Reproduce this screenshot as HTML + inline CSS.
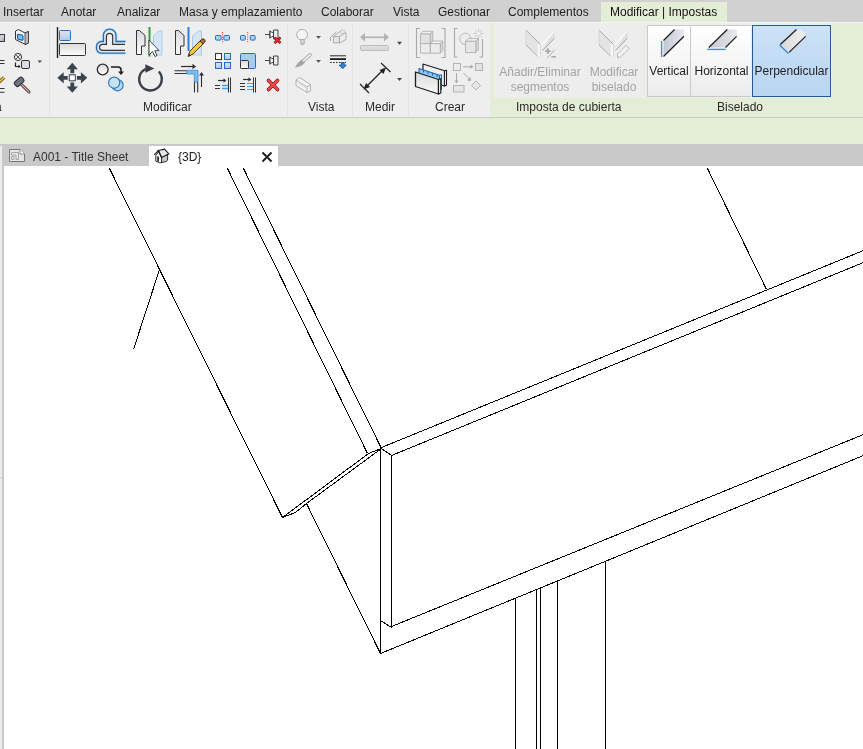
<!DOCTYPE html>
<html><head><meta charset="utf-8">
<style>
*{margin:0;padding:0;box-sizing:border-box}
html,body{width:863px;height:749px;overflow:hidden;background:#fff;font-family:"Liberation Sans",sans-serif;}
.mt,.pt,.bt,.tt{will-change:transform}
.abs{position:absolute}
.mt{position:absolute;top:5px;font-size:12px;color:#1e1e1e;white-space:nowrap;line-height:14px}
.pt{position:absolute;top:100px;font-size:12px;color:#2a2a2a;white-space:nowrap;line-height:14px}
.bt{position:absolute;font-size:12px;white-space:nowrap;line-height:15px;text-align:center}
.tt{position:absolute;top:0;font-size:12px;color:#333;white-space:nowrap;line-height:14px}
</style></head><body>
<!-- menubar -->
<div class="abs" style="left:0;top:0;width:863px;height:22px;background:#d1d1d1"></div>
<div class="abs" style="left:601px;top:2px;width:126px;height:21px;background:#e4eed6"></div>
<div class="mt" style="left:3px">Insertar</div>
<div class="mt" style="left:61px">Anotar</div>
<div class="mt" style="left:117px">Analizar</div>
<div class="mt" style="left:179px">Masa y emplazamiento</div>
<div class="mt" style="left:321px">Colaborar</div>
<div class="mt" style="left:393px">Vista</div>
<div class="mt" style="left:438px">Gestionar</div>
<div class="mt" style="left:508px">Complementos</div>
<div class="mt" style="left:610px;color:#111">Modificar | Impostas</div>
<!-- ribbon -->
<div class="abs" style="left:0;top:22px;width:863px;height:95px;background:#eeeeee"></div>
<div class="abs" style="left:490px;top:22px;width:373px;height:95px;background:#e4eed6"></div>
<div class="abs" style="left:494px;top:23px;width:150px;height:74.5px;background:#ededed"></div>
<div class="abs" style="left:645px;top:23px;width:186px;height:74.5px;background:#ededed"></div>
<div class="abs" style="left:0;top:117px;width:863px;height:1px;background:#c6cebd"></div>
<div class="abs" style="left:0;top:22px;width:863px;height:1px;background:#f3f5ee"></div>
<!-- dividers -->
<div class="abs" style="left:49px;top:24px;width:1px;height:92px;background:#e4e4e4"></div>
<div class="abs" style="left:287px;top:24px;width:1px;height:92px;background:#e4e4e4"></div>
<div class="abs" style="left:352px;top:24px;width:1px;height:92px;background:#e4e4e4"></div>
<div class="abs" style="left:408px;top:24px;width:1px;height:92px;background:#e4e4e4"></div>

<div class="pt" style="left:143px">Modificar</div>
<div class="pt" style="left:308px">Vista</div>
<div class="pt" style="left:365px">Medir</div>
<div class="pt" style="left:435px">Crear</div>
<div class="pt" style="left:515.5px">Imposta de cubierta</div>
<div class="pt" style="left:717px">Biselado</div>
<div class="pt" style="left:-5px">a</div>

<!-- biselado buttons -->
<div class="abs" style="left:647px;top:25px;width:44px;height:72px;background:linear-gradient(#ffffff,#ececec);border:1px solid #c9c9c9"></div>
<div class="abs" style="left:691px;top:25px;width:61px;height:72px;background:linear-gradient(#ffffff,#ececec);border:1px solid #c9c9c9;border-left:none"></div>
<div class="abs" style="left:752px;top:25px;width:79px;height:72px;background:linear-gradient(#cde2f7,#b8d5f1);border:1px solid #28589a;box-shadow:0 0 0 1px #dff1ff"></div>
<div class="bt" style="left:647px;top:63.5px;width:44px;color:#222">Vertical</div>
<div class="bt" style="left:691px;top:63.5px;width:61px;color:#222">Horizontal</div>
<div class="bt" style="left:752px;top:63.5px;width:79px;color:#222">Perpendicular</div>
<div class="bt" style="left:495px;top:64.5px;width:90px;color:#a3a3a3">Añadir/Eliminar<br>segmentos</div>
<div class="bt" style="left:585px;top:64.5px;width:58px;color:#a3a3a3">Modificar<br>biselado</div>

<!-- band + tabs -->
<div class="abs" style="left:0;top:118px;width:863px;height:26px;background:#e4eed6"></div>
<div class="abs" style="left:0;top:144px;width:863px;height:22px;background:#c9c9c9"></div>
<div class="abs" style="left:0;top:146px;width:2px;height:603px;background:#ececec"></div>
<div class="abs" style="left:2px;top:166px;width:2px;height:583px;background:#c9c9c9"></div>
<div class="abs" style="left:0;top:477px;width:2px;height:1px;background:#d4d4d4"></div>
<div class="abs" style="left:4px;top:166px;width:859px;height:583px;background:#fff"></div>
<div class="abs" style="left:149px;top:146px;width:129px;height:20px;background:#fff"></div>
<div class="tt" style="left:33px;top:150px">A001 - Title Sheet</div>
<div class="tt" style="left:178px;top:150px;color:#222">{3D}</div>

<svg class="abs" style="left:0;top:0" width="863" height="170">
<defs>
<linearGradient id="gg" x1="0" y1="0" x2="0" y2="1"><stop offset="0" stop-color="#d9d9dc"/><stop offset="1" stop-color="#fbfbfb"/></linearGradient>
<linearGradient id="bg" x1="0" y1="0" x2="0" y2="1"><stop offset="0" stop-color="#d6e9f7"/><stop offset="1" stop-color="#a6cbe8"/></linearGradient>
<linearGradient id="dg" x1="0" y1="0" x2="1" y2="1"><stop offset="0" stop-color="#c8cdd6"/><stop offset="1" stop-color="#f2f3f5"/></linearGradient>
</defs>
<!-- partial icons left edge -->
<defs><linearGradient id="pg" x1="0" y1="0" x2="1" y2="1"><stop offset="0" stop-color="#8d9096"/><stop offset="0.5" stop-color="#d6d8dc"/><stop offset="1" stop-color="#9a9da3"/></linearGradient></defs><rect x="-4" y="34.5" width="8.5" height="7" fill="url(#pg)" stroke="#3a3a3a"/>
<path d="M0 60.5H4.5M0 63.5H4.5" stroke="#333" stroke-width="1"/>
<path d="M-1 82L4 77.5" stroke="#5a3a10" stroke-width="3.2"/><path d="M-1 82L4 77.5" stroke="#f2c230" stroke-width="1.8"/>
<path d="M0 88.5H4.5M0 92.3H4.5" stroke="#333" stroke-width="1"/>
<!-- wall icon -->
<path d="M15.5 31L18.5 29.5L25 33L28.5 31.5V43L25.5 44.5L15.5 39.5Z" fill="#fafafa" stroke="#333"/>
<path d="M25 33V44.5L28.5 43V31.5Z" fill="#b8bcc4" stroke="#333" stroke-width="0.8"/>
<rect x="17.5" y="34.5" width="5.5" height="5" rx="1" fill="#7fc0f0" stroke="#1f64b0" stroke-width="1.2" transform="skewY(12) translate(0,-4)"/>
<!-- change type icon -->
<circle cx="18" cy="57" r="3.6" fill="none" stroke="#333"/>
<path d="M15.5 54.5L20.5 59.5M20.5 54.5L15.5 59.5" stroke="#333" stroke-width="0.8"/>
<path d="M15.5 62.5V66.5H19" stroke="#222" fill="none" stroke-width="1.2"/>
<path d="M18.5 64.5L20.5 66.5L18.5 68.5Z" fill="#222"/>
<rect x="21.5" y="60.5" width="8" height="8" rx="1.5" fill="#dadde2" stroke="#333"/>
<path d="M37.5 60.5H42L39.75 63Z" fill="#444"/>
<!-- hammer -->
<path d="M21.5 84.5L29 92" stroke="#3a2a25" stroke-width="3" stroke-linecap="round"/>
<path d="M21.5 84.5L29 92" stroke="#d4b0a8" stroke-width="1.3" stroke-linecap="round"/>
<rect x="14.1" y="79" width="10" height="5.7" rx="1.8" transform="rotate(-42 19.1 81.8)" fill="#6e737b" stroke="#2a2d33" stroke-width="1.1"/>
<!-- align -->
<path d="M57.5 27V58" stroke="#1c1c1c" stroke-width="1.4"/>
<rect x="59.5" y="30.5" width="11" height="10" rx="1" fill="url(#bg)" stroke="#2e6db4"/>
<rect x="59.5" y="43.5" width="26" height="12" rx="1" fill="url(#gg)" stroke="#333"/>
<!-- offset -->
<path d="M125.5 41.5H116V35.5A6.3 6.3 0 0 0 103.4 35.5V41.5H101.5A5 5 0 0 0 96.5 46.5V48.2A5 5 0 0 0 101.5 53.2H125.5" fill="none" stroke="#c4e2fa" stroke-width="3"/>
<path d="M125.5 41.5H116V35.5A6.3 6.3 0 0 0 103.4 35.5V41.5H101.5A5 5 0 0 0 96.5 46.5V48.2A5 5 0 0 0 101.5 53.2H125.5" fill="none" stroke="#2d6db4" stroke-width="1.3"/>
<path d="M125 44.3H112.7V36.5A3.15 3.15 0 0 0 106.4 36.5V44.3H102.5A3 3 0 0 0 99.5 47.3V47.5A3 3 0 0 0 102.5 50.4H125" fill="none" stroke="#333" stroke-width="1.2"/>
<!-- mirror pick -->
<path d="M136.5 30.5H139.5L145 35.5V46H141.5V54.5H136.5Z" fill="url(#gg)" stroke="#333"/>
<path d="M162 31H159L153.5 36V55H162Z" fill="#d4e6f5" stroke="#9cc3e4" stroke-width="0.8"/>
<path d="M149.5 27V56.5" stroke="#3c9a3c" stroke-width="2"/>
<path d="M149 40V55L152.5 51.5L155 56.5L157 55.5L154.8 50.8L159 50.5Z" fill="#fff" stroke="#333" stroke-width="0.9"/>
<!-- mirror draw -->
<path d="M175.5 30.5H178.5L184 35.5V46H180.5V54.5H175.5Z" fill="url(#gg)" stroke="#333"/>
<path d="M201.5 31H198.5L192.5 36V55H201.5Z" fill="#d4e6f5" stroke="#9cc3e4" stroke-width="0.8"/>
<path d="M188.5 27V51" stroke="#2f7fd0" stroke-width="2"/>
<path d="M188 56.5L190 51L200 41L203 44L193 54Z" fill="#f6c53a" stroke="#3a2a10" stroke-width="0.9"/>
<path d="M200 41L201.5 39.5A1.5 1.5 0 0 1 204.5 42.5L203 44Z" fill="#b06a40" stroke="#3a2a10" stroke-width="0.9"/>
<path d="M188 56.5L188.8 53.5L191 55.7Z" fill="#333"/>
<!-- move -->
<g fill="#3b434e">
<path d="M72.3 62.8L77.9 69.2H74.2V73.2H70.4V69.2H66.7Z"/>
<path d="M72.3 62.8L77.9 69.2H74.2V73.2H70.4V69.2H66.7Z" transform="rotate(90 72.3 77.8)"/>
<path d="M72.3 62.8L77.9 69.2H74.2V73.2H70.4V69.2H66.7Z" transform="rotate(180 72.3 77.8)"/>
<path d="M72.3 62.8L77.9 69.2H74.2V73.2H70.4V69.2H66.7Z" transform="rotate(270 72.3 77.8)"/>
</g>
<rect x="69.3" y="74.8" width="6" height="6" fill="#fff" stroke="#3b434e" stroke-width="1"/>
<!-- copy -->
<circle cx="102.7" cy="69.5" r="5.4" fill="url(#gg)" stroke="#2a2a2a" stroke-width="1.3"/>
<path d="M111 67H118A3 3 0 0 1 121 70V72" fill="none" stroke="#1a1a1a" stroke-width="1.5"/>
<path d="M118 71.5H124L121 75Z" fill="#222"/>
<circle cx="117.5" cy="85.2" r="5.6" fill="#b8dcf4" stroke="#2f78c4" stroke-width="1.2"/>
<circle cx="114.2" cy="82.7" r="5.6" fill="#c8e2f5" stroke="#2f78c4" stroke-width="1.2"/>
<!-- rotate -->
<path d="M158.8 71.5A11.3 11.3 0 1 1 145.5 69" fill="none" stroke="#3a3f46" stroke-width="2.4"/>
<path d="M145.3 64.3L154.4 68.4L145.3 72.8Z" fill="#3a3f46"/>
<!-- trim corner -->
<path d="M181 66.5H193" stroke="#2a2f36" stroke-width="1.2"/>
<path d="M192.5 63.8L196 66.5L192.5 69.2Z" fill="#2a2f36"/>
<path d="M174.5 70.8H186.5M174.5 73.5H186.5" stroke="#333" stroke-width="1.1"/>
<path d="M186.5 70.3H198V82H194.3V74H186.5Z" fill="#7bbdf0" stroke="#3c8ad6" stroke-width="0.8"/>
<path d="M194.5 82V92.5M197.7 82V92.5" stroke="#333" stroke-width="1.1"/>
<path d="M201.5 74V87" stroke="#2a2f36" stroke-width="1.1"/>
<path d="M199 75.5L201.5 72L204 75.5Z" fill="#2a2f36"/>

<!-- split -->
<rect x="215.5" y="35.5" width="5.6" height="4.6" rx="0.8" fill="#a9d1f1" stroke="#2c6cb4"/>
<rect x="223.9" y="35.5" width="5.6" height="4.6" rx="0.8" fill="#a9d1f1" stroke="#2c6cb4"/>
<path d="M222.5 32V43" stroke="#e03a3a" stroke-width="1" stroke-dasharray="1,1.3"/>
<rect x="240.5" y="35.5" width="4.8" height="4.6" rx="0.8" fill="#a9d1f1" stroke="#2c6cb4"/>
<rect x="250.3" y="35.5" width="4.8" height="4.6" rx="0.8" fill="#a9d1f1" stroke="#2c6cb4"/>
<path d="M247.7 32V43" stroke="#e03a3a" stroke-width="1" stroke-dasharray="1,1.3"/>
<!-- unpin -->
<g fill="#f6f6f6" stroke="#333" stroke-width="0.9" stroke-linejoin="round">
<path d="M265 34.5H269.8" fill="none"/>
<path d="M269.8 30.5V38.5"/>
<path d="M270 31.5L273.5 32.8V36.2L270 37.5Z"/>
<path d="M273.5 30H278V39H273.5Z" fill="#ececec"/>
</g>
<path d="M274.5 37.5L280.5 43M280.5 37.5L274.5 43" stroke="#8a1010" stroke-width="2.6"/>
<path d="M274.5 37.5L280.5 43M280.5 37.5L274.5 43" stroke="#e82a2a" stroke-width="1.4"/>
<!-- array -->
<rect x="215.5" y="53.5" width="6" height="6" fill="#f8f8f8" stroke="#333"/>
<rect x="224.5" y="53.5" width="6" height="6" fill="url(#bg)" stroke="#2c6cb4"/>
<rect x="215.5" y="62.5" width="6" height="6" fill="url(#bg)" stroke="#2c6cb4"/>
<rect x="224.5" y="62.5" width="6" height="6" fill="url(#bg)" stroke="#2c6cb4"/>
<!-- scale -->
<rect x="240.5" y="53.5" width="15" height="15" rx="1" fill="#a8cdea" stroke="#2c6cb4"/>
<rect x="240.5" y="60.5" width="8" height="8" rx="1" fill="url(#gg)" stroke="#333"/>
<!-- pin -->
<g transform="translate(0 26)" fill="#f6f6f6" stroke="#333" stroke-width="0.9" stroke-linejoin="round">
<path d="M265 34.5H269.8" fill="none"/>
<path d="M269.8 30.5V38.5"/>
<path d="M270 31.5L273.5 32.8V36.2L270 37.5Z"/>
<path d="M273.5 30H278V39H273.5Z" fill="#ececec"/>
</g>
<!-- trim multi -->
<path d="M218 80.5H224" stroke="#2a2f36" stroke-width="1.2"/><path d="M223.5 78.3L226.3 80.5L223.5 82.7Z" fill="#2a2f36"/>
<path d="M215 85.5H220M215 88.5H220" stroke="#333" stroke-width="1.1"/>
<path d="M222 85.5H228M222 88.5H228" stroke="#4aa0e8" stroke-width="1.3"/>
<path d="M228.5 77.5V92.5M230.5 77.5V92.5" stroke="#333" stroke-width="1"/>
<path d="M243 79.5H249" stroke="#2a2f36" stroke-width="1.2"/><path d="M248.5 77.3L251.3 79.5L248.5 81.7Z" fill="#2a2f36"/>
<path d="M240 83.5H245M240 86.5H245M240 89.5H245" stroke="#333" stroke-width="1"/>
<path d="M247 83.5H253M247 86.5H253M247 89.5H253" stroke="#4aa0e8" stroke-width="1.2"/>
<path d="M253.5 77.5V92.5M255.5 77.5V92.5" stroke="#333" stroke-width="1"/>
<!-- red x -->
<path d="M268.5 80.5L277.5 89.5M277.5 80.5L268.5 89.5" stroke="#8a1010" stroke-width="3.6" stroke-linecap="round"/>
<path d="M268.5 80.5L277.5 89.5M277.5 80.5L268.5 89.5" stroke="#f24a4a" stroke-width="2.2" stroke-linecap="round"/>

<!-- vista -->
<path d="M299.5 39.5A5.4 5.4 0 1 1 304.7 39.5Z" fill="#f5f5f5" stroke="#ababab" stroke-width="1"/>
<path d="M300.8 39.8H304.2V43.5A1 1 0 0 1 303.2 44.5H301.8A1 1 0 0 1 300.8 43.5Z" fill="#e8e8e8" stroke="#ababab" stroke-width="1"/>
<path d="M300.8 43H304.2" stroke="#b8b8b8" stroke-width="1.2"/>
<path d="M316 36H321L318.5 38.8Z" fill="#555"/>
<path d="M330.5 41V37L336.5 31.8M333.5 36.5L339.5 31.8H342M339.5 36.4L346 32.5V39.5L339.5 43" fill="none" stroke="#acacac" stroke-width="1"/>
<rect x="333.5" y="36.5" width="6" height="6.3" fill="#e4e4e4" stroke="#acacac" stroke-width="1"/>
<path d="M342.5 28.8V35M339.4 31.9H345.6M340.3 29.7L344.7 34.1M344.7 29.7L340.3 34.1" stroke="#bdbdbd" stroke-width="0.8"/>
<circle cx="342.5" cy="31.9" r="1.2" fill="#f4f4f4"/>
<path d="M295 67.8C296.5 65 298.2 62.2 301.8 59.6L305 62.6C302.5 65.6 299 67.3 295 67.8Z" fill="#a3a3a3"/>
<path d="M303.2 61L310 54.8" stroke="#adadad" stroke-width="3.6" stroke-linecap="round"/>
<path d="M303.6 60.6L310 54.8" stroke="#f2f2f2" stroke-width="1.6" stroke-linecap="round"/>
<path d="M316 60H321L318.5 62.8Z" fill="#555"/>
<path d="M330 55.8H346" stroke="#2a2a2a" stroke-width="1"/>
<path d="M330 59.1H346" stroke="#1e1e1e" stroke-width="1.8"/>
<path d="M330 62.5H346" stroke="#2a2a2a" stroke-width="1" stroke-dasharray="1.6,1.4"/>
<path d="M341.3 62.6H344.2V65H346.3L342.75 68.8L339.2 65H341.3Z" fill="#2a86e0" stroke="#0f4f9c" stroke-width="0.8"/>
<path d="M296 80L299.5 77.5L310.5 84.5V91L307 92.5L296 85.5Z M296 80L307 87V92.5M307 87L310.5 84.5" fill="#f3f3f3" stroke="#aaa" stroke-width="0.9"/>
<path d="M299 82.5L307.5 88" stroke="#d0d0d0" stroke-width="2"/>

<!-- medir -->
<path d="M361 37.3H388" stroke="#b3b3b3" stroke-width="1.6"/>
<path d="M360 37.3L365 33V41.5Z M389 37.3L384 33V41.5Z" fill="#b3b3b3"/>
<rect x="360.5" y="45.5" width="28" height="5" rx="1" fill="#d9d9d9" stroke="#bcbcbc"/>
<path d="M363 46V47.5M366 46V47.5M369 46V47.5M372 46V47.5M375 46V47.5M378 46V47.5M381 46V47.5M384 46V47.5M387 46V47.5" stroke="#f2f2f2" stroke-width="0.8"/>
<path d="M397 41.8H402L399.5 44.8Z" fill="#444"/>
<path d="M381 63L390.5 72M360 84L369 93" stroke="#222" stroke-width="1.2"/>
<path d="M367 86L384 69" stroke="#222" stroke-width="1.3"/>
<path d="M386 67.5L383.5 74L379.5 70Z M363.5 89.5L366 83L370 87Z" fill="#222"/>
<path d="M397 78.1H402L399.5 81.1Z" fill="#444"/>

<!-- crear: assembly -->
<path d="M420 28.5H416.5V57.5H420M441.5 28.5H445V57.5H441.5" fill="none" stroke="#a9a9a9" stroke-width="1.1"/>
<g stroke="#b0b0b0" stroke-width="0.9" stroke-linejoin="round">
<path d="M420.5 34L423 31.3H432.8L430.2 34Z" fill="#f4f4f4"/>
<path d="M430.2 34L432.8 31.3V41L430.2 43.6Z" fill="#d8d8d8"/>
<rect x="420.5" y="34" width="9.7" height="9.6" fill="#e2e2e2"/>
<rect x="420.5" y="43.6" width="9.7" height="9.6" fill="#ececec"/>
<path d="M430.5 43.6L433 41H442.8L440.3 43.6Z" fill="#f4f4f4"/>
<path d="M440.3 43.6L442.8 41V50.6L440.3 53.2Z" fill="#d8d8d8"/>
<rect x="430.5" y="43.6" width="9.8" height="9.6" fill="#ececec"/>
</g>
<!-- crear: group -->
<path d="M457.5 28.5H454.5V57H457.5M479.5 57H482.5V39" fill="none" stroke="#a9a9a9" stroke-width="1.1"/>
<circle cx="465.3" cy="38.8" r="5.6" fill="#ededed" stroke="#b3b3b3" stroke-width="0.9"/>
<g stroke="#b0b0b0" stroke-width="0.9" stroke-linejoin="round">
<path d="M465.5 41.3L468 38.6H478.3L475.8 41.3Z" fill="#f4f4f4"/>
<path d="M475.8 41.3L478.3 38.6V50L475.8 52.6Z" fill="#d8d8d8"/>
<rect x="465.5" y="41.3" width="10.3" height="11.3" fill="#e6e6e6"/>
</g>
<circle cx="478.5" cy="33.5" r="2" fill="#fafafa" stroke="#cfcfcf" stroke-width="0.8"/>
<path d="M478.5 28.5V31M478.5 36V38.5M473.5 33.5H476M481 33.5H483.5M475 30L476.6 31.6M480.4 35.4L482 37M482 30L480.4 31.6M476.6 35.4L475 37" stroke="#c4c4c4" stroke-width="0.9"/>
<!-- parts -->
<path d="M423 64L444.5 70.8V86L423 79.2Z" fill="#f0f0f0" stroke="#1e1e1e" stroke-width="1.2" stroke-linejoin="round"/>
<path d="M444.5 70.8L446.5 70.2V85.2L444.5 86Z" fill="#fff" stroke="#1e1e1e" stroke-width="1.1" stroke-linejoin="round"/>
<path d="M419 68.5L439.5 75.3V90.5L419 83.7Z" fill="#8cc8f5" stroke="#1f64b0" stroke-width="1.1" stroke-linejoin="round"/>
<path d="M439.5 75.3L441.5 74.7V89.7L439.5 90.5Z" fill="#b8defa" stroke="#1f64b0" stroke-width="1" stroke-linejoin="round"/>
<path d="M423.5 69.8V72.5M428 71.3V74M432.5 72.8V75.5M437 74.3V77" stroke="#1f64b0" stroke-width="1"/>
<path d="M415.5 72L438.5 79.5V94L415.5 86.5Z" fill="url(#gg)" stroke="#1e1e1e" stroke-width="1.3" stroke-linejoin="round"/>
<path d="M438.5 79.5L440.8 78.7V93L438.5 94Z" fill="#fff" stroke="#1e1e1e" stroke-width="1.2" stroke-linejoin="round"/>
<!-- flow -->
<rect x="453.5" y="63.5" width="7" height="7" fill="#ececec" stroke="#b3b3b3"/>
<rect x="475.5" y="63.5" width="7" height="7" fill="#e3e3e3" stroke="#b3b3b3"/>
<path d="M463 66.8H471" stroke="#a9a9a9" stroke-width="1"/><path d="M470.5 64.8L473.5 66.8L470.5 68.8Z" fill="#a9a9a9"/>
<path d="M456.5 73V81" stroke="#a9a9a9" stroke-width="1"/><path d="M454.5 80.5L456.5 83.5L458.5 80.5Z" fill="#a9a9a9"/>
<path d="M463.5 73L469.5 79" stroke="#a9a9a9" stroke-width="1"/><path d="M467 80.5L471 81L470.5 77Z" fill="#a9a9a9"/>
<rect x="453.5" y="85.5" width="10.5" height="6.5" fill="#e6e6e6" stroke="#b3b3b3"/>
<path d="M476 81L480.5 85.5L476 90L471.5 85.5Z" fill="#e6e6e6" stroke="#b3b3b3"/>

<!-- imposta disabled icons -->
<g>
<path d="M526 30.2L540 44V56.5L526 45Z" fill="#e4e4e4"/>
<path d="M537.8 44L540.5 44.5V56.5L537.8 56.3Z" fill="#f6f6f6"/>
<path d="M542.3 50L554.5 31V38.3L542.5 50.5Z" fill="#dedede"/>
<path d="M542.3 44L554.5 31" stroke="#f8f8f8" stroke-width="1.2"/>
<path d="M526 30.2L540 44M526 45L537.8 56.3M542.5 50.5L554.5 38.3" stroke="#a3a3a3" stroke-width="0.9"/>
<path d="M526 30.2V45M540.5 44.5V56.5" stroke="#cfcfcf" stroke-width="0.8"/>
</g>
<path d="M545 51.1H550.6M547.8 48.3V53.9" stroke="#a8a8a8" stroke-width="1.8"/>
<path d="M547.3 57.8L554.5 50" stroke="#a8a8a8" stroke-width="0.9"/>
<path d="M551.3 56.8H556" stroke="#a8a8a8" stroke-width="1.5"/>
<g transform="translate(73 0)">
<path d="M526 30.2L540 44V56.5L526 45Z" fill="#e4e4e4"/>
<path d="M537.8 44L540.5 44.5V56.5L537.8 56.3Z" fill="#f6f6f6"/>
<path d="M542.3 50L554.5 31V38.3L542.5 50.5Z" fill="#dedede"/>
<path d="M542.3 44L554.5 31" stroke="#f8f8f8" stroke-width="1.2"/>
<path d="M526 30.2L540 44M526 45L537.8 56.3M542.5 50.5L554.5 38.3" stroke="#a3a3a3" stroke-width="0.9"/>
<path d="M526 30.2V45M540.5 44.5V56.5" stroke="#cfcfcf" stroke-width="0.8"/>
</g>
<path d="M617.5 57.5V54L626 45.5L629 48.5L620.5 57Z" fill="#f4f4f4" stroke="#b0b0b0" stroke-width="0.9"/>
<!-- biselado icons -->
<defs><linearGradient id="bv" x1="0" y1="0" x2="1" y2="0"><stop offset="0" stop-color="#c3c8d0"/><stop offset="1" stop-color="#e6e9ee"/></linearGradient>
<linearGradient id="bp" x1="0" y1="0" x2="1" y2="0"><stop offset="0" stop-color="#d8d8da"/><stop offset="1" stop-color="#f0f0f0"/></linearGradient></defs>
<path d="M663.5 40.5L674.5 29.5H684V36.3L663.5 56.5Z" fill="url(#bv)"/>
<path d="M663.5 40.5L674.5 29.5M663.5 56.5L684 36.3" stroke="#222" stroke-width="1.3"/>
<path d="M661.6 41V57" stroke="#3f8ee0" stroke-width="1.4"/>
<path d="M708.8 47.5L727.3 29.5H737V36.4L725.5 47.5Z" fill="url(#bv)"/>
<path d="M708.8 47.5L727.3 29.5M725.5 47.5L736.6 36.4" stroke="#222" stroke-width="1.3"/>
<path d="M707.2 49.4H725.8" stroke="#3f8ee0" stroke-width="1.4"/>
<path d="M780.3 44.5L796.5 29.5H801L805.6 34V36.4L789.1 52.4Z" fill="url(#bp)"/>
<path d="M780.3 44.5L796.5 29.5M789.1 52.4L805.6 36.4" stroke="#222" stroke-width="1.3"/>
<path d="M779.5 45L788.5 53.5" stroke="#3f8ee0" stroke-width="1.5"/>
<!-- tab icons -->
<path d="M9.5 149.5H20L24.5 154V161.5H9.5Z" fill="#e6e6e6" stroke="#777" stroke-width="1"/>
<path d="M11.5 152.5H18.5V159.5H16V155H11.5ZM11.5 156.5H14V159.5H11.5Z" fill="none" stroke="#999" stroke-width="0.8"/>
<path d="M20 149.5V154H24.5" fill="#fff" stroke="#777" stroke-width="0.8"/>
<path d="M155.8 155.5L158.6 151.8L161.6 157V162.6L159.6 162.8L155.8 161.2Z" fill="#fafafa" stroke="#2a2a2a" stroke-width="1"/>
<path d="M161.6 157.2L167.6 154.2V160.2L166 161.5L161.6 162.6Z" fill="#c6cad0" stroke="#2a2a2a" stroke-width="1"/>
<path d="M158.4 150.5L164.5 149.2L168.8 153.8L161.6 157.6Z" fill="#e6e8ec" stroke="#1e1e1e" stroke-width="1.1"/>
<path d="M154.2 154.8L158.4 150.5L161.6 157.6" fill="none" stroke="#1e1e1e" stroke-width="1.1"/>
<rect x="157.2" y="156.4" width="1.8" height="5.2" fill="#2a2f38"/>
<path d="M262.5 152.5L271.5 161.5M271.5 152.5L262.5 161.5" stroke="#1a1a1a" stroke-width="1.8"/>
</svg>

<svg class="abs" style="left:0;top:0" width="863" height="749" shape-rendering="crispEdges">
<g stroke="#000" stroke-width="1" fill="none">
<polyline points="109.5,168.5 282.5,517.5 368.5,453.5 381.5,448.5"/>
<line x1="159.5" y1="269.5" x2="133.5" y2="349.5"/>
<line x1="227.5" y1="168.5" x2="367.5" y2="453.5"/>
<line x1="243.5" y1="168.5" x2="381.5" y2="448.5"/>
<polyline points="282.5,517.5 295.5,512.5 306.5,503.5 381.5,448.5"/>
<line x1="306.5" y1="503.5" x2="380.5" y2="653.5"/>
<line x1="380.5" y1="448.5" x2="380.5" y2="653.5"/>
<line x1="381.5" y1="448.5" x2="391.5" y2="455.5"/>
<line x1="391.5" y1="455.5" x2="391.5" y2="627.5"/>
<line x1="380.5" y1="620.5" x2="391.5" y2="627.5"/>
<line x1="381.5" y1="447.5" x2="863.5" y2="250.5"/>
<line x1="391.5" y1="455.5" x2="863.5" y2="262.5"/>
<line x1="391.5" y1="626.5" x2="863.5" y2="434.5"/>
<line x1="380.5" y1="653.5" x2="863.5" y2="455.5"/>
<line x1="707.5" y1="168.5" x2="766.5" y2="289.5"/>
<line x1="515.5" y1="598" x2="515.5" y2="749"/>
<line x1="536.5" y1="589" x2="536.5" y2="749"/>
<line x1="540.5" y1="588" x2="540.5" y2="749"/>
<line x1="557.5" y1="581" x2="557.5" y2="749"/>
<line x1="605.5" y1="562" x2="605.5" y2="749"/>
</g>
</svg>
</body></html>
